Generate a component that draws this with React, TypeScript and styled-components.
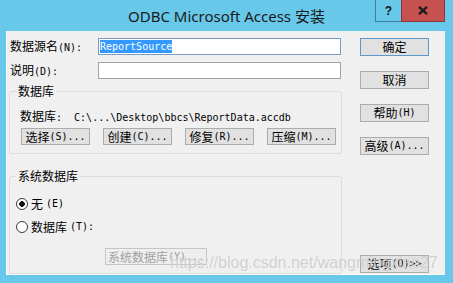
import React from 'react';
import styled, { createGlobalStyle } from 'styled-components';

const Global = createGlobalStyle`
  html, body { margin: 0; padding: 0; background: #68c8ea; }
  body {
    width: 453px; height: 283px; overflow: hidden;
    font-family: "Noto Sans CJK SC", sans-serif; font-size: 12px; color: #000;
  }
`;

const Window = styled.div`
  position: relative;
  width: 453px; height: 283px;
  background: #68c8ea;
  display: flex; flex-direction: column;
  overflow: hidden;
`;

const TitleBar = styled.div`
  height: 31px; flex: none;
  display: grid;
  grid-template-columns: 1fr auto 1fr;
  align-items: start;
`;

const TitleText = styled.div`
  grid-column: 2;
  padding-top: 6px;
  font-family: "Noto Sans", "Noto Sans CJK SC", sans-serif;
  font-size: 15px; line-height: 20px;
  color: #1a1a1a;
  white-space: nowrap;
`;

const CaptionButtons = styled.div`
  grid-column: 3;
  justify-self: end;
  display: flex;
  margin-right: 8px;
`;

const HelpButton = styled.div`
  width: 26px; height: 22px; box-sizing: border-box;
  border: 1px solid #3f7f9c; border-top: none; border-right: none;
  display: flex; align-items: center; justify-content: center;
  font-family: "Liberation Sans", sans-serif; font-weight: bold; font-size: 12px;
  color: #161616;
`;

const CloseButton = styled.div`
  width: 44px; height: 22px; box-sizing: border-box;
  background: #c75050;
  border: 1px solid #8c3535; border-top: none;
  display: flex; align-items: center; justify-content: center;
`;

const Client = styled.div`
  flex: 1;
  margin: 0 8px 8px 6px;
  background: #f0f0f0;
  border-left: 1px solid #fbfbfb;
  border-bottom: 1px solid #fbfbfb;
  box-sizing: border-box;
  display: flex;
  padding: 7px 16px 0 2px;
`;

const LeftCol = styled.div`
  width: 333px;
  display: flex; flex-direction: column;
`;

const FieldRow = styled.div`
  display: flex; align-items: center;
  height: 17px;
  & + & { margin-top: 7px; }
`;

const Label = styled.div`
  width: 89px; box-sizing: border-box; padding-left: 1px;
  line-height: 14px; white-space: pre;
`;

const TextBox = styled.div<{ $focus?: boolean }>`
  width: 243px; height: 17px; box-sizing: border-box;
  border: 1px solid ${p => (p.$focus ? '#7a9cc2' : '#a3a3a3')};
  background: #fff;
  display: flex; align-items: center;
  padding-left: 1px;
`;

const Selected = styled.span`
  background: #3399ff; color: #fff;
  font-family: "DejaVu Sans Mono", monospace; font-size: 10px;
  line-height: 13px; display: inline-block;
`;

const Lat = styled.span`
  font-family: "DejaVu Sans Mono", monospace;
  font-size: 10px;
`;

const Group = styled.fieldset<{ $top: number }>`
  margin: ${p => p.$top}px 0 0 0;
  padding: 0 0 8px 0;
  border: 1px solid #d8dde2;
  border-radius: 3px;
  min-width: 0;
  box-sizing: border-box;
  width: 333px;
`;

const Legend = styled.legend`
  margin-left: 6px;
  padding: 0 2px;
  font-size: 12px; line-height: 14px;
`;

const PathLine = styled.div`
  margin: 11px 0 0 10px;
  line-height: 14px;
  white-space: pre;
`;

const ButtonRow = styled.div`
  display: flex; gap: 13px;
  margin: 3px 0 0 11px;
`;

const Btn = styled.button<{ $w?: number; $h?: number; $default?: boolean; $off?: boolean }>`
  width: ${p => p.$w ?? 69}px;
  height: ${p => p.$h ?? 18}px;
  box-sizing: border-box;
  margin: 0; padding: 0;
  border: 1px solid ${p => (p.$default ? '#5b98cc' : p.$off ? '#c6c6c6' : '#acacac')};
  background: ${p => (p.$off ? '#eeeeee' : '#e1e1e1')};
  color: ${p => (p.$off ? '#a0a0a0' : '#000')};
  font-family: "Noto Sans CJK SC", sans-serif;
  font-size: 12px; line-height: 14px;
  display: flex; align-items: center; justify-content: center;
  white-space: pre;
`;

const RadioRow = styled.div<{ $top: number }>`
  display: flex; align-items: center; gap: 3px;
  margin: ${p => p.$top}px 0 0 6px;
  height: 14px; line-height: 14px;
`;

const Radio = styled.span<{ $checked?: boolean }>`
  width: 12px; height: 12px; box-sizing: border-box;
  border-radius: 50%;
  border: 1px solid #3c3c3c;
  background: ${p => (p.$checked ? 'radial-gradient(circle, #111 0 2.6px, #fff 3px)' : '#fff')};
`;

const SysBtnWrap = styled.div`
  margin: 14px 0 0 95px;
`;

const RightCol = styled.div`
  margin-left: auto;
  width: 69px;
  display: flex; flex-direction: column; gap: 15px;
  padding-bottom: 1px;
`;

const BottomBtn = styled(Btn)`
  margin-top: auto;
`;

const Watermark = styled.div`
  position: absolute;
  left: 170px; top: 254px;
  font-family: "Liberation Sans", sans-serif;
  font-size: 16px; line-height: 18px;
  color: rgba(170, 170, 170, 0.55);
  text-shadow: 0 0 1px rgba(255, 255, 255, 0.8);
  white-space: nowrap;
  pointer-events: none;
`;

export default function App() {
  return (
    <Window>
      <Global />
      <TitleBar>
        <TitleText>ODBC Microsoft Access 安装</TitleText>
        <CaptionButtons>
          <HelpButton>?</HelpButton>
          <CloseButton>
            <svg width="10" height="9" viewBox="0 0 10 9">
              <path d="M1 0.8 L9 8.2 M9 0.8 L1 8.2" stroke="#1c1c1c" strokeWidth="2.3" />
            </svg>
          </CloseButton>
        </CaptionButtons>
      </TitleBar>
      <Client>
        <LeftCol>
          <FieldRow>
            <Label>数据源名<Lat>(N):</Lat></Label>
            <TextBox $focus><Selected>ReportSource</Selected></TextBox>
          </FieldRow>
          <FieldRow>
            <Label>说明<Lat>(D):</Lat></Label>
            <TextBox />
          </FieldRow>
          <Group $top={5}>
            <Legend>数据库</Legend>
            <PathLine>数据库<Lat>:  C:\...\Desktop\bbcs\ReportData.accdb</Lat></PathLine>
            <ButtonRow>
              <Btn $h={17}>选择<Lat>(S)...</Lat></Btn>
              <Btn $h={17}>创建<Lat>(C)...</Lat></Btn>
              <Btn $h={17}>修复<Lat>(R)...</Lat></Btn>
              <Btn $h={17}>压缩<Lat>(M)...</Lat></Btn>
            </ButtonRow>
          </Group>
          <Group $top={15}>
            <Legend>系统数据库</Legend>
            <RadioRow $top={14}><Radio $checked />无<Lat>(E)</Lat></RadioRow>
            <RadioRow $top={9}><Radio />数据库<Lat>(T):</Lat></RadioRow>
            <SysBtnWrap>
              <Btn $off $w={102} $h={17}>系统数据库<Lat>(Y)...</Lat></Btn>
            </SysBtnWrap>
          </Group>
        </LeftCol>
        <RightCol>
          <Btn $default>确定</Btn>
          <Btn>取消</Btn>
          <Btn>帮助<Lat>(H)</Lat></Btn>
          <Btn>高级<Lat>(A)...</Lat></Btn>
          <BottomBtn>选项<Lat>(O)&gt;&gt;</Lat></BottomBtn>
        </RightCol>
      </Client>
      <Watermark>https://blog.csdn.net/wangmingxiao27</Watermark>
    </Window>
  );
}
